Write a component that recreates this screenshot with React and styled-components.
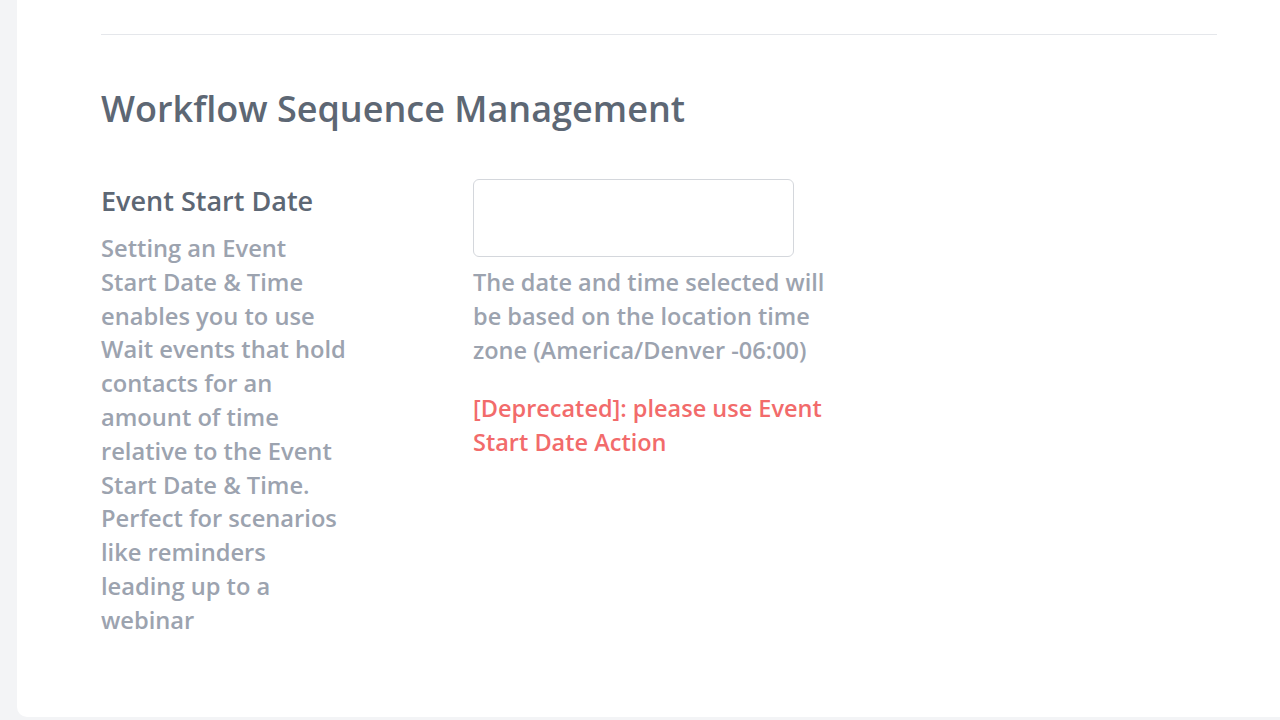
import React from "react";
import styled, { createGlobalStyle } from "styled-components";

const GlobalStyle = createGlobalStyle`
  html, body {
    margin: 0;
    padding: 0;
    background: #f3f4f6;
    font-family: "Open Sans", "Noto Sans", sans-serif;
  }
`;

const Page = styled.div`
  height: 720px;
  overflow: hidden;
  padding-left: 17px;
  box-sizing: border-box;
`;

const Card = styled.div`
  background: #ffffff;
  height: 717px;
  padding: 34px 63px 0 84px;
  box-sizing: border-box;
  border-bottom-left-radius: 10px;
`;

const Divider = styled.hr`
  border: none;
  border-top: 1px solid #e5e7eb;
  margin: 0;
`;

const Heading = styled.h2`
  margin: 52px 0 0;
  font-size: 36px;
  font-weight: 600;
  color: #5d6774;
  line-height: 44px;
`;

const Row = styled.div`
  display: grid;
  grid-template-columns: 372px 366px;
  margin-top: 54px;
`;

const Label = styled.div`
  font-size: 27px;
  font-weight: 600;
  color: #5d6774;
  line-height: 32px;
`;

const Description = styled.p`
  margin: 15px 0 0;
  width: 245px;
  font-size: 23.7px;
  font-weight: 600;
  color: #9ca3af;
  line-height: 33.8px;
`;

const Field = styled.div`
  display: flex;
  flex-direction: column;
`;

const Input = styled.input`
  width: 321px;
  height: 78px;
  box-sizing: border-box;
  border: 1px solid #d4d7dc;
  border-radius: 6px;
  margin-top: -6px;
  outline: none;
`;

const Help = styled.p`
  margin: 9px 0 0;
  font-size: 23.5px;
  font-weight: 600;
  color: ${({ $danger }) => ($danger ? "#f26b6b" : "#9ca3af")};
  line-height: 33.8px;
  & + & {
    margin-top: 25px;
  }
`;

export default function App() {
  return (
    <Page>
      <GlobalStyle />
      <Card>
        <Divider />
        <Heading>Workflow Sequence Management</Heading>
        <Row>
          <div>
            <Label>Event Start Date</Label>
            <Description>
              Setting an Event Start Date &amp; Time enables you to use Wait
              events that hold contacts for an amount of time relative to the
              Event Start Date &amp; Time. Perfect for scenarios like reminders
              leading up to a webinar
            </Description>
          </div>
          <Field>
            <Input type="text" />
            <Help>
              The date and time selected will be based on the location time
              zone (America/Denver -06:00)
            </Help>
            <Help $danger>[Deprecated]: please use Event Start Date Action</Help>
          </Field>
        </Row>
      </Card>
    </Page>
  );
}
